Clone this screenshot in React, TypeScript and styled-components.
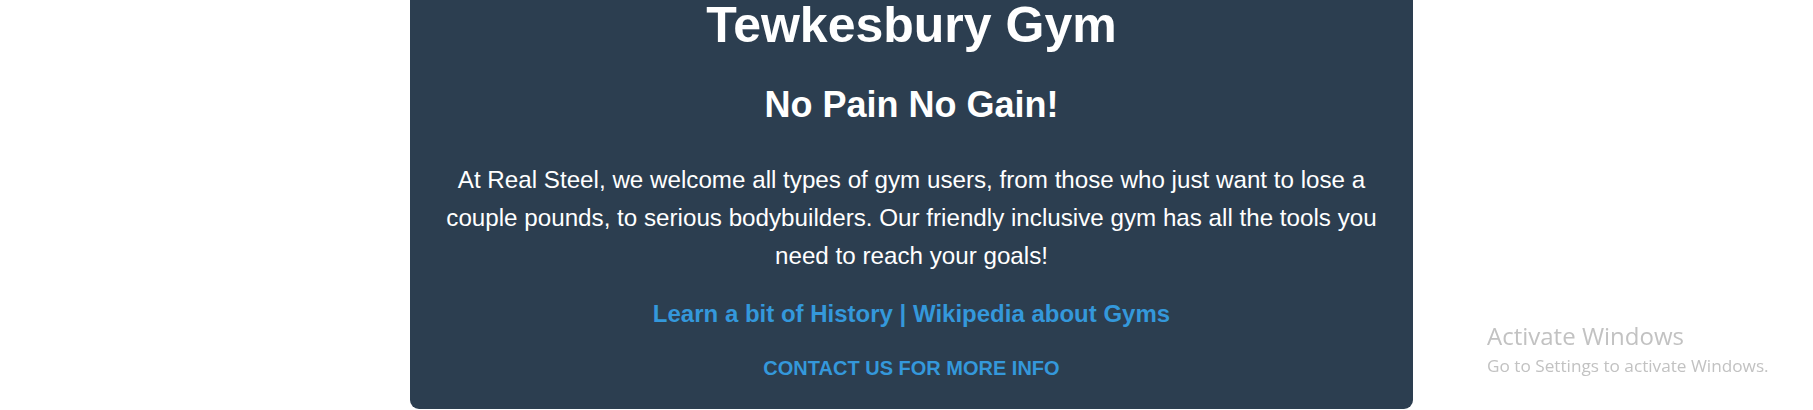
import styled, { createGlobalStyle } from "styled-components";

const GlobalStyle = createGlobalStyle`
    html, body {
        margin: 0;
        padding: 0;
        background: #fff;
        font-family: "Liberation Sans", Arial, sans-serif;
    }
    body {
        height: 410px;
        overflow: hidden;
    }
`;

const Page = styled.div`
    display: flex;
    justify-content: center;
    padding-left: 10px;
`;

const Card = styled.section`
    width: 1003px;
    box-sizing: border-box;
    background-color: #2c3e50;
    color: #fff;
    text-align: center;
    padding: 0 20px 29px;
    border-radius: 0 0 9px 9px;
`;

const Title = styled.h1`
    margin: 0;
    font-size: 50px;
    line-height: 50px;
    font-weight: 700;
`;

const Slogan = styled.h2`
    margin: 34px 0 0;
    font-size: 36px;
    font-weight: 700;
`;

const Intro = styled.p`
    margin: 35px 0 0;
    font-size: 24.2px;
    line-height: 38px;
`;

const Links = styled.p`
    margin: 25px 0 0;
    font-size: 24px;
    font-weight: 700;
    color: #3498db;
    a {
        color: inherit;
        text-decoration: none;
    }
`;

const Contact = styled.a`
    display: block;
    margin-top: 29px;
    font-size: 20px;
    font-weight: 700;
    color: #3498db;
    text-decoration: none;
    text-transform: uppercase;
`;

const Watermark = styled.div`
    position: fixed;
    left: 1487px;
    top: 321px;
    color: #c2c2c2;
    font-family: "Open Sans", "Noto Sans", sans-serif;
    pointer-events: none;
`;

const WatermarkTitle = styled.div`
    font-size: 24px;
    line-height: 30px;
`;

const WatermarkText = styled.div`
    font-size: 17.2px;
    line-height: 22px;
    margin-top: 4px;
`;

function App() {
    return (
        <>
            <GlobalStyle />
            <Page>
                <Card>
                    <Title>Tewkesbury Gym</Title>
                    <Slogan>No Pain No Gain!</Slogan>
                    <Intro>
                        At Real Steel, we welcome all types of gym users, from those who just want to lose a
                        couple pounds, to serious bodybuilders. Our friendly inclusive gym has all the tools you
                        need to reach your goals!
                    </Intro>
                    <Links>
                        <a href="#history">Learn a bit of History</a> | <a href="#wiki">Wikipedia about Gyms</a>
                    </Links>
                    <Contact href="#contact">Contact us for more info</Contact>
                </Card>
            </Page>
            <Watermark>
                <WatermarkTitle>Activate Windows</WatermarkTitle>
                <WatermarkText>Go to Settings to activate Windows.</WatermarkText>
            </Watermark>
        </>
    );
}

export default App;
